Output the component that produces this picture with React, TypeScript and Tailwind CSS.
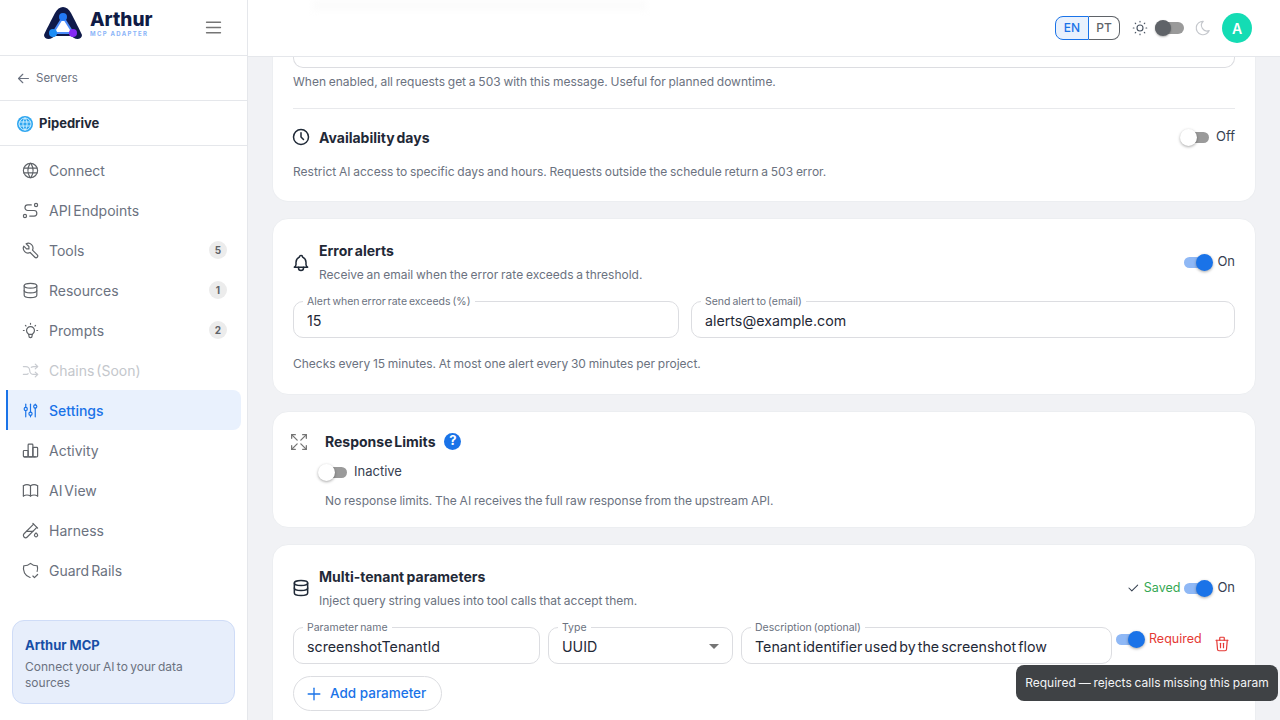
import {
  TbArrowLeft,
  TbMenu2,
  TbWorld,
  TbRoute,
  TbTool,
  TbDatabase,
  TbBulb,
  TbArrowsShuffle,
  TbAdjustments,
  TbChartBar,
  TbBook,
  TbTestPipe,
  TbShieldCheck,
  TbSun,
  TbMoon,
  TbClock,
  TbBell,
  TbArrowsMaximize,
  TbCheck,
  TbPlus,
  TbTrash,
} from 'react-icons/tb';

const font = "[font-family:Inter,'Noto_Sans',sans-serif]";

const navItems = [
  { label: 'Connect', icon: TbWorld },
  { label: 'API Endpoints', icon: TbRoute },
  { label: 'Tools', icon: TbTool, count: 5 },
  { label: 'Resources', icon: TbDatabase, count: 1 },
  { label: 'Prompts', icon: TbBulb, count: 2 },
  { label: 'Chains (Soon)', icon: TbArrowsShuffle, disabled: true },
  { label: 'Settings', icon: TbAdjustments, active: true },
  { label: 'Activity', icon: TbChartBar },
  { label: 'AI View', icon: TbBook },
  { label: 'Harness', icon: TbTestPipe },
  { label: 'Guard Rails', icon: TbShieldCheck },
];

function Logo() {
  return (
    <div className="flex items-start gap-[8px] self-start mt-[7px]">
      <svg width="38" height="32" viewBox="0 0 38 32">
        <path d="M0 28 C0 32 5 33 8 31 L11 29 H27 L30 31 C33 33 38 32 38 28 C37 25 30 12 27 6 C23 -2 15 -2 11 6 C8 12 1 25 0 28 Z" fill="#0f1a4a" />
        <path d="M19 10 L9 26 H29 Z" fill="#ffffff" stroke="#4d8dfa" strokeWidth="2" />
        <path d="M11 31 H27 V29 H11 Z" fill="#ffffff" />
        <circle cx="19" cy="10" r="4" fill="#2379f5" />
        <circle cx="9" cy="26" r="4" fill="#1d8df5" />
        <circle cx="29" cy="26" r="4" fill="#8429f5" />
      </svg>
      <div className="flex flex-col pt-[4px]">
        <span className="text-[19px] leading-[18px] font-extrabold text-[#101b45]">Arthur</span>
        <span className="mt-[1px] text-[6px] leading-[7px] font-bold tracking-[1.3px] text-[#8ab4f8]">MCP ADAPTER</span>
      </div>
    </div>
  );
}

function Toggle({ on }: { on: boolean }) {
  return (
    <span className={`relative inline-block w-[24px] h-[11px] rounded-full shrink-0 ${on ? 'bg-[#8fb8f5]' : 'bg-[#9a9a9a]'}`}>
      <span
        className={`absolute top-[-3px] w-[17px] h-[17px] rounded-full shadow-[0_1px_3px_rgba(0,0,0,0.35)] ${
          on ? 'right-[-5px] bg-[#1a73e8]' : 'left-[-5px] bg-white'
        }`}
      />
    </span>
  );
}

function Field({ label, value, className, select }: { label: string; value: string; className: string; select?: boolean }) {
  return (
    <div className={`relative h-[37px] rounded-[10px] border border-[#dcdde1] flex items-center px-[13px] pt-[2px] ${className}`}>
      <span className="absolute -top-[7px] left-[9px] bg-white px-1 text-[10.5px] leading-[13px] text-[#6b7280] whitespace-nowrap [word-spacing:-1px]">
        {label}
      </span>
      <span className="text-[14.25px] text-[#1f2937] whitespace-nowrap [word-spacing:-2px]">{value}</span>
      {select && (
        <span className="ml-auto w-0 h-0 border-x-[5px] border-x-transparent border-t-[5px] border-t-[#757575]" />
      )}
    </div>
  );
}

function Help({ children, className }: { children: string; className: string }) {
  return <p className={`text-[12px] leading-[16px] text-[#6b7280] [word-spacing:-0.6px] ${className}`}>{children}</p>;
}

export default function App() {
  return (
    <div className={`${font} flex h-[720px] w-[1280px] overflow-hidden bg-[#f1f2f5]`}>
      <aside className="w-[248px] shrink-0 flex flex-col bg-white border-r border-[#e5e7eb]">
        <div className="h-[56px] shrink-0 flex items-center pl-[44px] pr-[23px] justify-between border-b border-[#e5e7eb]">
          <Logo />
          <TbMenu2 size={21} strokeWidth={1.5} className="text-[#757575]" />
        </div>
        <div className="h-[45px] shrink-0 flex items-center gap-[4px] pl-[15px] border-b border-[#e5e7eb] text-[11.5px] text-[#6b7280]">
          <TbArrowLeft size={17} strokeWidth={1.6} />
          <span className="pt-[1px]">Servers</span>
        </div>
        <div className="h-[45px] shrink-0 flex items-center gap-[6px] pl-[17px] pt-[1px] border-b border-[#e5e7eb]">
          <span className="w-4 h-4 rounded-full bg-[#2ea6f0] flex items-center justify-center">
            <TbWorld size={16} strokeWidth={1.5} className="text-[#c9ecff]" />
          </span>
          <span className="text-[13px] font-bold text-[#1f2937]">Pipedrive</span>
        </div>
        <nav className="pt-[4px] px-[6px] flex flex-col">
          {navItems.map((item) => (
            <div
              key={item.label}
              className={`h-[40px] flex items-center pr-[14px] gap-[9px] text-[14px] [word-spacing:-2px] ${
                item.active
                  ? 'bg-[#e9f1fd] text-[#1a73e8] font-medium border-l-2 border-[#1a73e8] pl-[13px] rounded-r-[8px]'
                  : item.disabled
                    ? 'text-[#c4c7cc] pl-[15px]'
                    : 'text-[#6b7280] pl-[15px]'
              }`}
            >
              <item.icon
                size={19}
                strokeWidth={1.5}
                className={item.active ? 'text-[#1a73e8]' : item.disabled ? 'text-[#c9ccd1]' : 'text-[#5f6368]'}
              />
              <span>{item.label}</span>
              {item.count !== undefined && (
                <span className="ml-auto w-[18px] h-[18px] rounded-full bg-[#ececec] text-[#5f6368] text-[10px] font-bold flex items-center justify-center">
                  {item.count}
                </span>
              )}
            </div>
          ))}
        </nav>
        <div className="mt-[30px] mx-[12px] h-[84px] rounded-[12px] bg-[#e7eefb] border border-[#cfdcf7] px-[12px] pt-[15px]">
          <div className="text-[13px] leading-[18px] font-bold text-[#174ea6]">Arthur MCP</div>
          <div className="mt-[5px] text-[12px] leading-[16px] text-[#6b7280] [word-spacing:-1px]">
            Connect your AI to your data sources
          </div>
        </div>
      </aside>

      <div className="flex-1 min-w-0 flex flex-col">
        <header className="relative h-[57px] shrink-0 bg-white border-b border-[#e5e7eb] flex items-center justify-end pr-[28px]">
          <div className="absolute top-0 left-[64px] w-[335px] h-[11px] bg-[#fcfcfc] blur-[3px]" />
          <div className="flex h-[24px] text-[12px] font-medium rounded-[8px] mr-[11px]">
            <span className="w-[34px] flex items-center justify-center rounded-l-[8px] border border-[#1a73e8] bg-[#e9f1fd] text-[#1a73e8]">EN</span>
            <span className="w-[31px] flex items-center justify-center rounded-r-[8px] border border-l-0 border-[#5f6368] text-[#5f6368]">PT</span>
          </div>
          <TbSun size={18} strokeWidth={1.5} className="text-[#4b5563] mr-[6px]" />
          <span className="relative w-[29px] h-[12px] rounded-full bg-[#9a9a9a] mr-[10px]">
            <span className="absolute -top-[2px] left-0 w-4 h-4 rounded-full bg-[#5f6368] shadow-[0_1px_2px_rgba(0,0,0,0.3)]" />
          </span>
          <TbMoon size={18} strokeWidth={1.5} className="text-[#c4c7cc] mr-[10px]" />
          <span className="w-[30px] h-[30px] rounded-full bg-[#14dcb4] text-white text-[14px] font-semibold flex items-center justify-center">A</span>
        </header>

        <main className="flex-1 min-h-0 overflow-hidden px-[24px] flex flex-col gap-[16px]">
          <section className="shrink-0 bg-white rounded-b-[16px] border border-t-0 border-[#eceef1] px-[20px] h-[145px]">
            <div className="h-[11px] rounded-b-[10px] border border-t-0 border-[#dcdde1]" />
            <Help className="mt-[6px]">When enabled, all requests get a 503 with this message. Useful for planned downtime.</Help>
            <div className="mt-[18px] border-t border-[#e8e9ec]" />
            <div className="mt-[18px] flex items-center h-[20px]">
              <TbClock size={20} strokeWidth={1.8} className="text-[#1f2937] -ml-[2px]" />
              <span className="ml-[8px] text-[14px] font-bold text-[#1f2937] [word-spacing:-1.5px]">Availability days</span>
              <span className="ml-auto flex items-center gap-[7px] text-[13px] text-[#374151]">
                <Toggle on={false} />
                Off
              </span>
            </div>
            <Help className="mt-[17px]">Restrict AI access to specific days and hours. Requests outside the schedule return a 503 error.</Help>
          </section>

          <section className="shrink-0 bg-white rounded-[16px] border border-[#eceef1] px-[20px] h-[177px] pt-[22px]">
            <div className="flex items-center h-[42px]">
              <TbBell size={20} strokeWidth={1.8} className="text-[#1f2937] -ml-[2px] mt-[1px]" />
              <div className="ml-[8px]">
                <div className="text-[14px] leading-[20px] font-bold text-[#1f2937] [word-spacing:-1.5px]">Error alerts</div>
                <Help className="mt-[6px]">Receive an email when the error rate exceeds a threshold.</Help>
              </div>
              <span className="ml-auto flex items-center gap-[9px] text-[13px] text-[#374151]">
                <Toggle on />
                On
              </span>
            </div>
            <div className="mt-[18px] flex gap-[12px]">
              <Field label="Alert when error rate exceeds (%)" value="15" className="w-[386px] shrink-0" />
              <Field label="Send alert to (email)" value="alerts@example.com" className="flex-1" />
            </div>
            <Help className="mt-[18px]">Checks every 15 minutes. At most one alert every 30 minutes per project.</Help>
          </section>

          <section className="shrink-0 bg-white rounded-[16px] border border-[#eceef1] pl-[18px] pr-[20px] h-[117px] pt-[19px]">
            <div className="flex items-center h-[20px]">
              <TbArrowsMaximize size={22} strokeWidth={1.4} className="text-[#757575] -ml-[3px] mt-[1px]" />
              <span className="ml-[15px] text-[14px] font-bold text-[#1f2937] [word-spacing:-1.5px]">Response Limits</span>
              <span className="ml-[9px] w-[17px] h-[17px] rounded-full bg-[#1a73e8] text-white text-[13px] font-bold flex items-center justify-center">?</span>
            </div>
            <div className="mt-[11px] ml-[32px] h-[20px] flex items-center gap-[7px] text-[13px] text-[#374151]">
              <Toggle on={false} />
              Inactive
            </div>
            <Help className="mt-[11px] ml-[34px]">No response limits. The AI receives the full raw response from the upstream API.</Help>
          </section>

          <section className="relative shrink-0 bg-white rounded-t-[16px] border border-[#eceef1] px-[20px] h-[200px] pt-[22px]">
            <div className="flex items-center h-[42px]">
              <TbDatabase size={20} strokeWidth={1.8} className="text-[#1f2937] -ml-[2px]" />
              <div className="ml-[8px]">
                <div className="text-[14px] leading-[20px] font-bold text-[#1f2937] [word-spacing:-1px]">Multi-tenant parameters</div>
                <Help className="mt-[6px]">Inject query string values into tool calls that accept them.</Help>
              </div>
              <span className="ml-auto flex items-center text-[13px] text-[#374151]">
                <TbCheck size={14} strokeWidth={1.8} className="text-[#374151] mr-[4px]" />
                <span className="text-[12.5px] text-[#34a853] mr-[4px]">Saved</span>
                <Toggle on />
                <span className="ml-[9px]">On</span>
              </span>
            </div>
            <div className="mt-[18px] flex items-start gap-[8px]">
              <Field label="Parameter name" value="screenshotTenantId" className="w-[247px] shrink-0" />
              <Field label="Type" value="UUID" select className="w-[185px] shrink-0 border-[#bdbfc4]" />
              <Field label="Description (optional)" value="Tenant identifier used by the screenshot flow" className="w-[371px] shrink-0" />
              <span className="-ml-[4px] mt-[2px] h-[20px] flex items-center gap-[9px] text-[12.5px] text-[#e53935]">
                <Toggle on />
                Required
              </span>
              <TbTrash size={18} strokeWidth={1.6} className="ml-[3px] mt-[8px] text-[#e53935]" />
            </div>
            <button className="mt-[12px] h-[35px] w-[149px] rounded-full border border-[#dcdde1] flex items-center pl-[10px] gap-[6px] text-[13.5px] font-medium text-[#1a73e8]">
              <TbPlus size={20} strokeWidth={1.6} />
              Add parameter
            </button>
            <div className="absolute top-[120px] right-[-23px] h-[36px] w-[262px] rounded-[8px] bg-[#3f4245] flex items-center justify-center text-[12px] text-[#f3f4f6] whitespace-nowrap [word-spacing:-0.5px]">
              Required — rejects calls missing this param
            </div>
          </section>
        </main>
      </div>
    </div>
  );
}
